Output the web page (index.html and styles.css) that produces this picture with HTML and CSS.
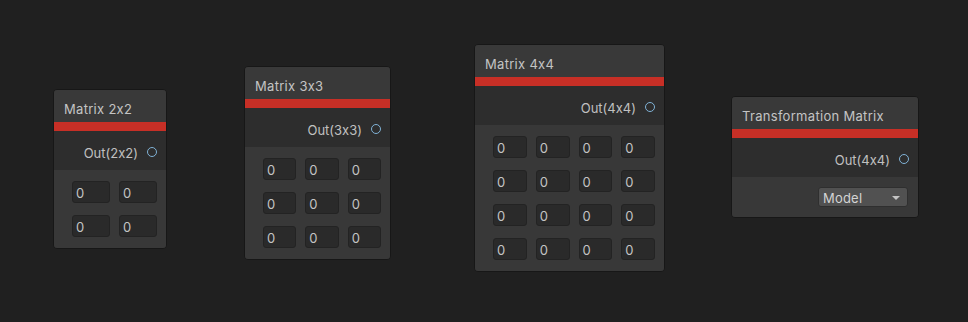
FILE: index.html
```html
<!DOCTYPE html>
<html>
<head>
    <title>Matrix Nodes</title>
    <meta name="viewport" content="width=device-width, initial-scale=1.0">
    <link rel="stylesheet" href="styles.css">
</head>
<body>
    <div class="graph">
        <!-- Matrix 2x2 -->
        <div class="node node-2x2">
            <div class="node-title">Matrix 2x2</div>
            <div class="node-accent"></div>
            <div class="node-ports">
                <span class="port-label">Out(2x2)</span>
                <span class="port"></span>
            </div>
            <div class="node-inputs cols-2">
                <div class="field">0</div><div class="field">0</div>
                <div class="field">0</div><div class="field">0</div>
            </div>
        </div>

        <!-- Matrix 3x3 -->
        <div class="node node-3x3">
            <div class="node-title">Matrix 3x3</div>
            <div class="node-accent"></div>
            <div class="node-ports">
                <span class="port-label">Out(3x3)</span>
                <span class="port"></span>
            </div>
            <div class="node-inputs cols-3">
                <div class="field">0</div><div class="field">0</div><div class="field">0</div>
                <div class="field">0</div><div class="field">0</div><div class="field">0</div>
                <div class="field">0</div><div class="field">0</div><div class="field">0</div>
            </div>
        </div>

        <!-- Matrix 4x4 -->
        <div class="node node-4x4">
            <div class="node-title">Matrix 4x4</div>
            <div class="node-accent"></div>
            <div class="node-ports">
                <span class="port-label">Out(4x4)</span>
                <span class="port"></span>
            </div>
            <div class="node-inputs cols-4">
                <div class="field">0</div><div class="field">0</div><div class="field">0</div><div class="field">0</div>
                <div class="field">0</div><div class="field">0</div><div class="field">0</div><div class="field">0</div>
                <div class="field">0</div><div class="field">0</div><div class="field">0</div><div class="field">0</div>
                <div class="field">0</div><div class="field">0</div><div class="field">0</div><div class="field">0</div>
            </div>
        </div>

        <!-- Transformation Matrix -->
        <div class="node node-transform">
            <div class="node-title">Transformation Matrix</div>
            <div class="node-accent"></div>
            <div class="node-ports">
                <span class="port-label">Out(4x4)</span>
                <span class="port"></span>
            </div>
            <div class="node-options">
                <div class="dropdown">
                    <span>Model</span>
                    <span class="dropdown-arrow"></span>
                </div>
            </div>
        </div>
    </div>
</body>
</html>
```

FILE: styles.css
```css
body {
    margin: 0;
    background-color: #202020;
    font-family: "Inter", "Roboto", sans-serif;
    font-feature-settings: "calt" 0; /* keep 2x2 as plain x, not a multiply sign */
    color: #c4c4c4;
    overflow: hidden;
}

/* Canvas the nodes sit on */
.graph {
    position: relative;
    width: 968px;
    height: 322px;
}

/* A single graph node */
.node {
    position: absolute;
    border: 1px solid #171717;
    border-radius: 4px;
    overflow: hidden;
    background-color: #2e2e2e;
}

.node-2x2 { left: 53px; top: 89px; width: 112px; }
.node-3x3 { left: 244px; top: 66px; width: 145px; }
.node-4x4 { left: 474px; top: 44px; width: 189px; }
.node-transform { left: 731px; top: 96px; width: 186px; }

/* Title bar */
.node-title {
    height: 26px;
    padding: 6px 0 0 10px;
    line-height: 26px;
    font-size: 13px;
    letter-spacing: 0.3px;
    background-color: #393939;
    color: #c4c4c4;
    white-space: nowrap;
}

/* Red category stripe under the title */
.node-accent {
    height: 9px;
    background-color: #c72f26;
}

/* Output port row */
.node-ports {
    display: flex;
    justify-content: flex-end;
    align-items: center;
    height: 39px;
    background-color: #2d2d2d;
}

.port-label {
    font-size: 13px;
    padding-top: 5px;
    color: #c0c0c0;
}

.port {
    width: 8px;
    height: 8px;
    border: 1px solid #80b2d6;
    border-radius: 50%;
    margin: 2px 9px 0 9px;
}

/* Matrix entry grid */
.node-inputs {
    display: grid;
    gap: 12px 9px;
    padding: 11px 9px 11px 18px;
    background-color: #383838;
}

.cols-2 { grid-template-columns: repeat(2, 1fr); }
.cols-3 { grid-template-columns: repeat(3, 1fr); }
.cols-4 { grid-template-columns: repeat(4, 1fr); }

.field {
    height: 18px;
    padding: 2px 0 0 3px;
    line-height: 18px;
    font-size: 13px;
    background-color: #2a2a2a;
    border: 1px solid #232323;
    border-radius: 3px;
    color: #c4c4c4;
}

/* Dropdown row of the transformation node */
.node-options {
    display: flex;
    justify-content: flex-end;
    padding: 10px 10px 10px 0;
    background-color: #383838;
}

.dropdown {
    display: flex;
    justify-content: space-between;
    align-items: center;
    box-sizing: border-box;
    width: 90px;
    height: 20px;
    padding: 1px 7px 0 4px;
    font-size: 13px;
    letter-spacing: 0.2px;
    color: #d4d4d4;
    background-color: #515151;
    border: 1px solid #2f2f2f;
    border-radius: 3px;
}

.dropdown-arrow {
    width: 0;
    height: 0;
    border-left: 4px solid transparent;
    border-right: 4px solid transparent;
    border-top: 4px solid #c4c4c4;
}
```
